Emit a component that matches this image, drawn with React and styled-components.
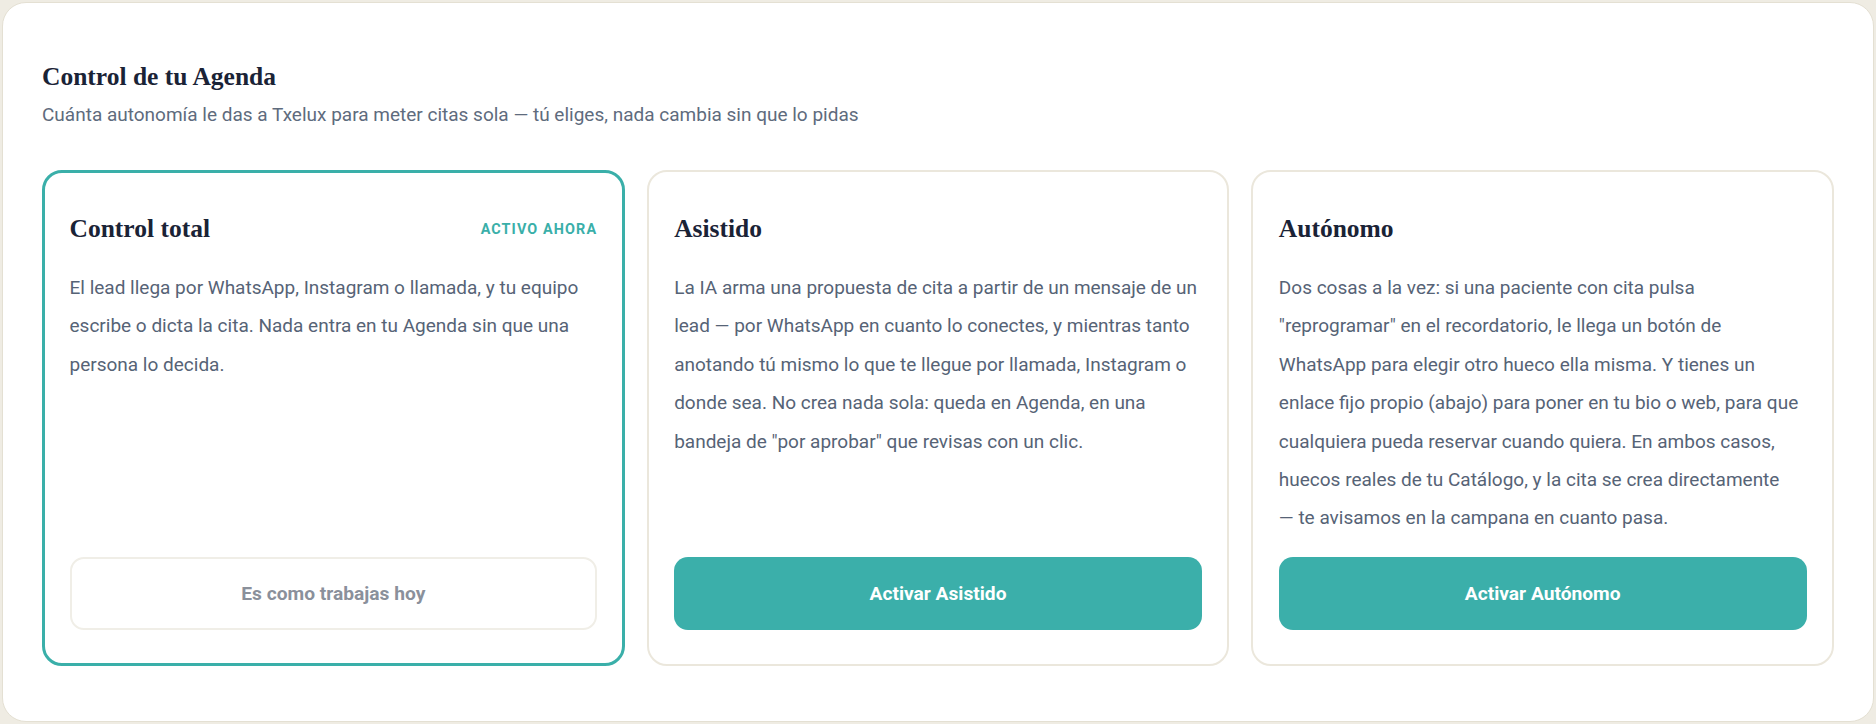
import React from 'react';
import styled, { createGlobalStyle } from 'styled-components';

const GlobalStyle = createGlobalStyle`
  html, body {
    margin: 0;
    padding: 0;
    background: #efece3;
  }
  * { box-sizing: border-box; }
`;

const modes = [
  {
    title: 'Control total',
    active: true,
    text: 'El lead llega por WhatsApp, Instagram o llamada, y tu equipo escribe o dicta la cita. Nada entra en tu Agenda sin que una persona lo decida.',
    action: 'Es como trabajas hoy',
  },
  {
    title: 'Asistido',
    text: 'La IA arma una propuesta de cita a partir de un mensaje de un lead — por WhatsApp en cuanto lo conectes, y mientras tanto anotando tú mismo lo que te llegue por llamada, Instagram o donde sea. No crea nada sola: queda en Agenda, en una bandeja de "por aprobar" que revisas con un clic.',
    action: 'Activar Asistido',
  },
  {
    title: 'Autónomo',
    // nbsp keeps the dash with the next word
    text: 'Dos cosas a la vez: si una paciente con cita pulsa "reprogramar" en el recordatorio, le llega un botón de WhatsApp para elegir otro hueco ella misma. Y tienes un enlace fijo propio (abajo) para poner en tu bio o web, para que cualquiera pueda reservar cuando quiera. En ambos casos, huecos reales de tu Catálogo, y la cita se crea directamente —\u00A0te avisamos en la campana en cuanto pasa.',
    action: 'Activar Autónomo',
  },
];

function AgendaControl() {
  return (
    <Panel>
      <Heading>Control de tu Agenda</Heading>
      <Subtitle>
        Cuánta autonomía le das a Txelux para meter citas sola — tú eliges, nada cambia sin que lo pidas
      </Subtitle>
      <CardGrid>
        {modes.map((m) => (
          <Card key={m.title} $active={m.active}>
            <CardHeader>
              <CardTitle>{m.title}</CardTitle>
              {m.active && <ActiveTag>Activo ahora</ActiveTag>}
            </CardHeader>
            <CardText>{m.text}</CardText>
            <ActionButton $ghost={m.active}>{m.action}</ActionButton>
          </Card>
        ))}
      </CardGrid>
    </Panel>
  );
}

export default function App() {
  return (
    <>
      <GlobalStyle />
      <Page>
        <AgendaControl />
      </Page>
    </>
  );
}

const Page = styled.div`
  padding: 2px;
  height: 724px;
`;

const Panel = styled.section`
  height: 720px;
  background: #ffffff;
  border: 1px solid #e4e0d3;
  border-radius: 24px;
  padding: 58px 39px 0;
`;

const Heading = styled.h2`
  margin: 0;
  font-family: 'Liberation Serif', 'Times New Roman', serif;
  font-weight: 700;
  font-size: 25.5px;
  line-height: 32px;
  color: #1a2336;
`;

const Subtitle = styled.p`
  margin: 8px 0 0;
  font-family: Roboto, 'Liberation Sans', sans-serif;
  font-size: 19px;
  line-height: 28px;
  color: #5e6b7d;
`;

const CardGrid = styled.div`
  display: grid;
  grid-template-columns: repeat(3, 1fr);
  gap: 22px;
  margin-top: 41px;
`;

const Card = styled.div`
  height: 496px;
  display: flex;
  flex-direction: column;
  background: #ffffff;
  border: ${(p) => (p.$active ? '3px solid #3aafa9' : '2px solid #ebe7dc')};
  border-radius: 20px;
  padding: ${(p) => (p.$active ? '40px 24.5px 33px' : '41px 25.5px 34px')};
`;

const CardHeader = styled.div`
  display: flex;
  align-items: center;
  justify-content: space-between;
`;

const CardTitle = styled.h3`
  margin: 0;
  font-family: 'Liberation Serif', 'Times New Roman', serif;
  font-weight: 700;
  font-size: 25.5px;
  line-height: 32px;
  color: #1a2336;
`;

const ActiveTag = styled.span`
  font-family: Roboto, 'Liberation Sans', sans-serif;
  font-weight: 700;
  font-size: 14.4px;
  letter-spacing: 1.1px;
  text-transform: uppercase;
  color: #3aafa9;
`;

const CardText = styled.p`
  margin: 24px 0 0;
  font-family: Roboto, 'Liberation Sans', sans-serif;
  font-size: 19px;
  line-height: 38.4px;
  color: #566376;
`;

const ActionButton = styled.button`
  margin-top: auto;
  width: 100%;
  height: 73px;
  border-radius: 14px;
  font-family: Roboto, 'Liberation Sans', sans-serif;
  font-weight: 700;
  font-size: 19.2px;
  cursor: pointer;
  border: ${(p) => (p.$ghost ? '2px solid #f0eee7' : 'none')};
  background: ${(p) => (p.$ghost ? '#ffffff' : '#3bafaa')};
  color: ${(p) => (p.$ghost ? '#8a909b' : '#ffffff')};
`;
